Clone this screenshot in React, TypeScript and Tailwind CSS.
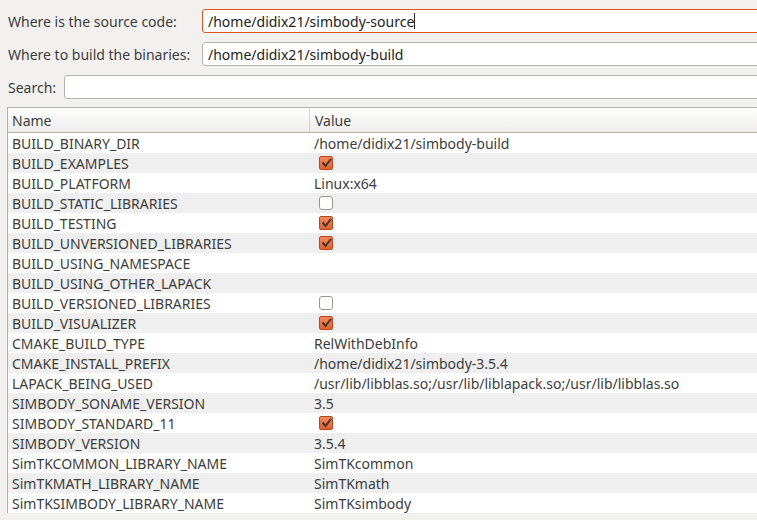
import React from 'react';

type Row = { name: string; value?: string; check?: boolean };

const rows: Row[] = [
  { name: 'BUILD_BINARY_DIR', value: '/home/didix21/simbody-build' },
  { name: 'BUILD_EXAMPLES', check: true },
  { name: 'BUILD_PLATFORM', value: 'Linux:x64' },
  { name: 'BUILD_STATIC_LIBRARIES', check: false },
  { name: 'BUILD_TESTING', check: true },
  { name: 'BUILD_UNVERSIONED_LIBRARIES', check: true },
  { name: 'BUILD_USING_NAMESPACE', value: '' },
  { name: 'BUILD_USING_OTHER_LAPACK', value: '' },
  { name: 'BUILD_VERSIONED_LIBRARIES', check: false },
  { name: 'BUILD_VISUALIZER', check: true },
  { name: 'CMAKE_BUILD_TYPE', value: 'RelWithDebInfo' },
  { name: 'CMAKE_INSTALL_PREFIX', value: '/home/didix21/simbody-3.5.4' },
  { name: 'LAPACK_BEING_USED', value: '/usr/lib/libblas.so;/usr/lib/liblapack.so;/usr/lib/libblas.so' },
  { name: 'SIMBODY_SONAME_VERSION', value: '3.5' },
  { name: 'SIMBODY_STANDARD_11', check: true },
  { name: 'SIMBODY_VERSION', value: '3.5.4' },
  { name: 'SimTKCOMMON_LIBRARY_NAME', value: 'SimTKcommon' },
  { name: 'SimTKMATH_LIBRARY_NAME', value: 'SimTKmath' },
  { name: 'SimTKSIMBODY_LIBRARY_NAME', value: 'SimTKsimbody' },
];

const CheckBox = ({ on }: { on: boolean }) =>
  on ? (
    <div className="w-[14px] h-[14px] rounded-[2px] border border-[#b5461c] bg-gradient-to-b from-[#f58a5e] to-[#e0602f] flex items-center justify-center">
      <svg width="11" height="10" viewBox="0 0 11 10">
        <path d="M1.5 4.5 L4.5 8 L10 0.8" fill="none" stroke="#4a3328" strokeWidth="2" />
      </svg>
    </div>
  ) : (
    <div className="w-[14px] h-[14px] rounded-[3px] border border-[#9a9793] bg-white" />
  );

const App = () => {
  return (
    <div className="w-[757px] h-[520px] overflow-hidden bg-[#f2f1f0] text-[#3c3c3c] text-[14px] font-['Noto_Sans',sans-serif]">
      <div className="pl-2 pt-[9px] flex flex-col gap-[9px]">
        <div className="flex items-center h-[24px]">
          <div className="w-[194px] shrink-0">Where is the source code:</div>
          <div className="h-[24px] w-[600px] shrink-0 rounded-[3px] border border-[#e2541f] bg-white flex items-center pl-[5px] text-[14px] text-[#222]">
            /home/didix21/simbody-source<span className="inline-block w-px h-[16px] bg-[#222]" />
          </div>
        </div>
        <div className="flex items-center h-[24px]">
          <div className="w-[194px] shrink-0">Where to build the binaries:</div>
          <div className="h-[24px] w-[600px] shrink-0 rounded-[3px] border border-[#b5b2ad] bg-white flex items-center pl-[5px] text-[14px] text-[#222]">
            /home/didix21/simbody-build
          </div>
        </div>
        <div className="flex items-center h-[24px]">
          <div className="w-[56px] shrink-0">Search:</div>
          <div className="h-[24px] w-[740px] shrink-0 rounded-[3px] border border-[#b5b2ad] bg-white" />
        </div>
      </div>
      <div className="mt-[8px] ml-[7px] w-[800px] border-l border-t border-[#b6b3ae] bg-white">
        <div className="flex h-[25px] border-b border-[#b6b3ae] bg-gradient-to-b from-white to-[#eeedec]">
          <div className="w-[302px] shrink-0 pl-[4px] pt-[1px] flex items-center border-r border-[#d6d3cf]">Name</div>
          <div className="pl-[5px] pt-[1px] flex items-center">Value</div>
        </div>
        {rows.map((r, i) => (
          <div key={r.name} className={`flex h-[20px] items-center ${i % 2 ? 'bg-[#efefef]' : 'bg-white'}`}>
            <div className="w-[303px] shrink-0 pl-[4px] whitespace-nowrap">{r.name}</div>
            <div className="pl-[3px] whitespace-nowrap">
              {r.check === undefined ? r.value : (
                <div className="pl-[5px]"><CheckBox on={r.check} /></div>
              )}
            </div>
          </div>
        ))}
      </div>
    </div>
  );
};

export default App;
